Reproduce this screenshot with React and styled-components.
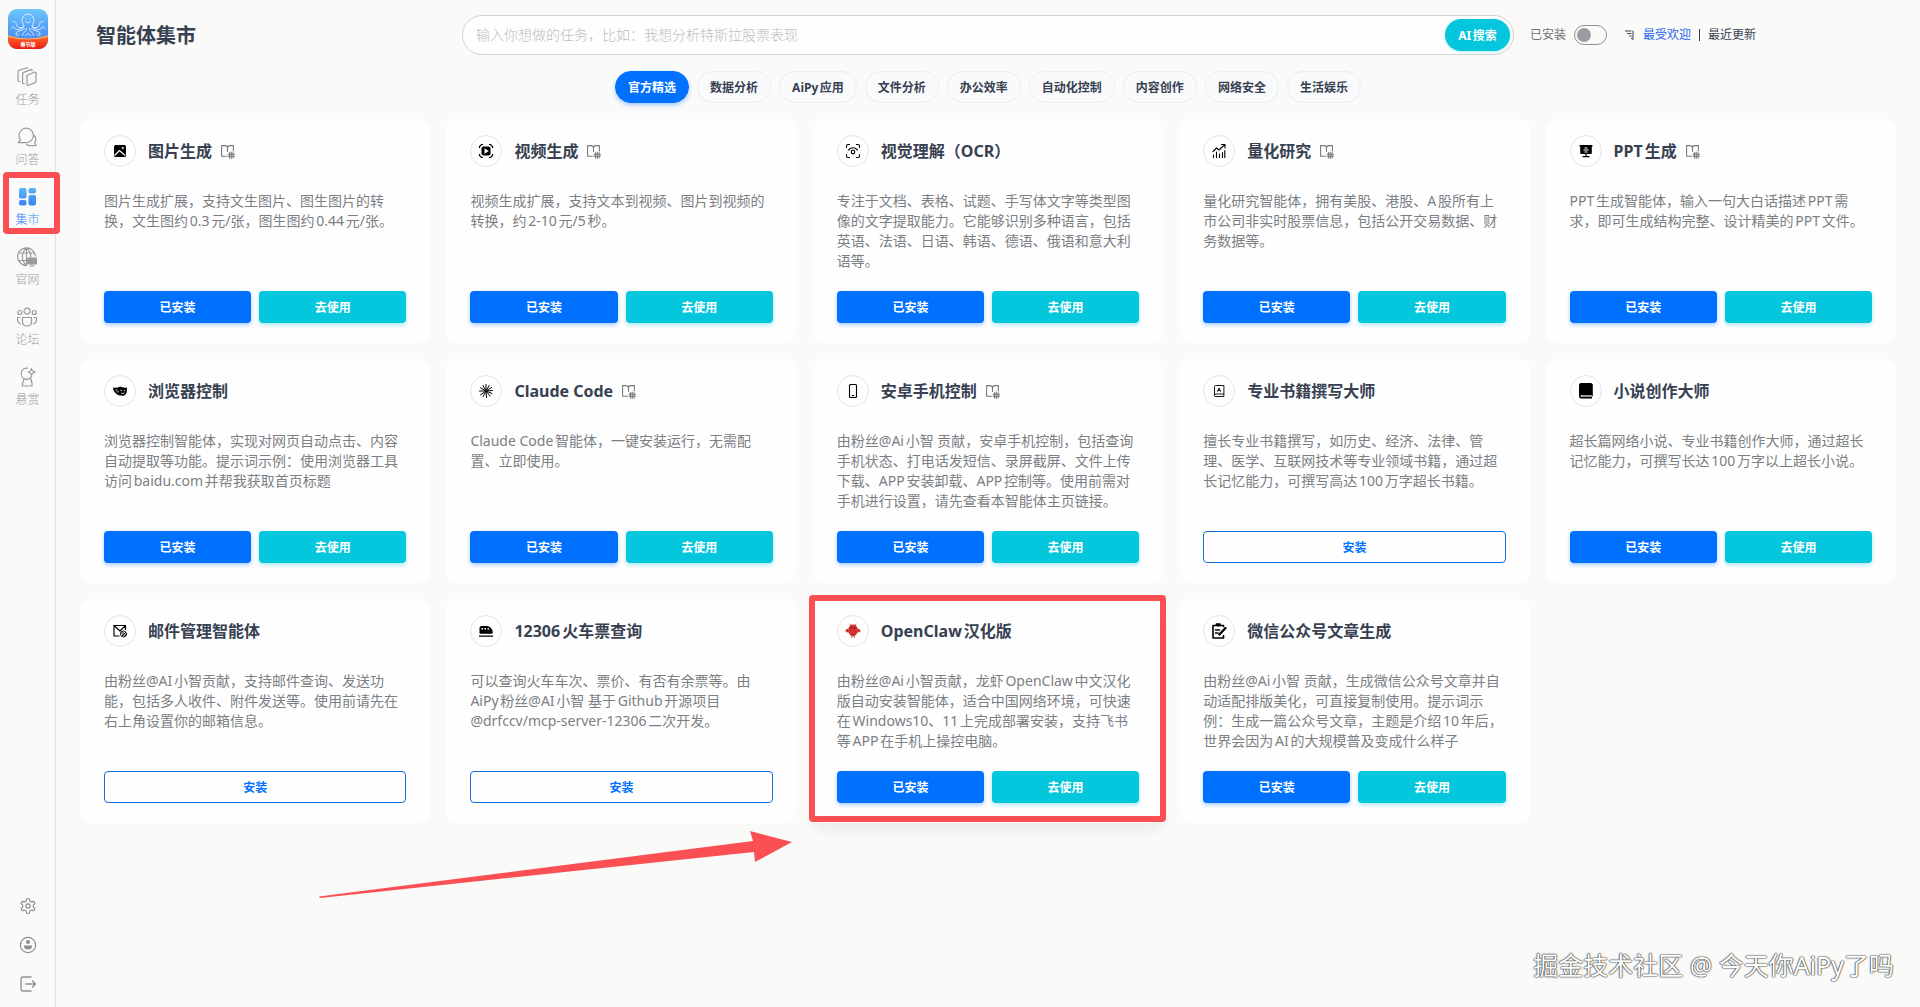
import React from "react";
import styled, { createGlobalStyle, css } from "styled-components";

const fontStack = `"Noto Sans", "Noto Sans CJK SC", sans-serif`;
const red = "#fa5053";

const GlobalStyle = createGlobalStyle`
  *, *::before, *::after { box-sizing: border-box; }
  body {
    margin: 0;
    background: #fafaf9;
    color: #374151;
    font-family: ${fontStack};
    text-autospace: normal;
  }
  button, input { font-family: inherit; }
  svg { display: block; }
`;

/* ---------- layout ---------- */

const Shell = styled.div`
  display: flex;
  min-height: 100vh;
`;

const Sidebar = styled.nav`
  flex: 0 0 56px;
  display: flex;
  flex-direction: column;
  align-items: center;
  padding: 9px 0 14px;
  border-right: 1px solid #e2e2e2;
`;

const NavList = styled.ul`
  list-style: none;
  margin: 18px 0 0;
  padding: 0;
`;

const NavItem = styled.li`
  position: relative;
  height: 60px;
`;

const NavLink = styled.a`
  display: flex;
  flex-direction: column;
  align-items: center;
  gap: 4px;
  font-size: 12px;
  line-height: 18px;
  font-weight: 300;
  color: ${(p) => (p.$active ? "#3b8cf8" : "#9b9b9b")};
  text-decoration: none;
`;

const NavHighlight = styled.span`
  position: absolute;
  inset: -15px -20px 13px -12px;
  border: 6px solid ${red};
  border-radius: 4px;
  pointer-events: none;
`;

const SideTools = styled.div`
  margin-top: auto;
  display: flex;
  flex-direction: column;
  gap: 21px;
`;

const ToolButton = styled.button`
  padding: 0;
  border: 0;
  background: none;
  color: #8e8e8e;
  cursor: pointer;
`;

const Main = styled.main`
  position: relative;
  flex: 1;
  min-width: 0;
  padding: 15px 24px 24px;
`;

const Header = styled.header`
  display: flex;
  align-items: center;
  padding: 0 140px 0 16px;
`;

const PageTitle = styled.h1`
  flex: 0 0 366px;
  margin: 0;
  padding-top: 2px;
  font-size: 20px;
  line-height: 38px;
  font-weight: 700;
  color: #374151;
`;

const SearchBox = styled.form`
  flex: 1;
  display: flex;
  align-items: center;
  height: 40px;
  padding: 0 3px 0 13px;
  border: 1px solid #d3d3d3;
  border-radius: 20px;
  background: #fefefe;
`;

const SearchInput = styled.input`
  flex: 1;
  min-width: 0;
  border: 0;
  outline: 0;
  padding: 0;
  background: transparent;
  font-size: 14px;
  line-height: 20px;
  &::placeholder { color: #bdbdbd; font-weight: 300; opacity: 1; }
`;

const SearchButton = styled.button`
  width: 65px;
  height: 32px;
  padding: 0;
  border: 0;
  border-radius: 16px;
  background: #04c6dc;
  color: #fff;
  font-size: 12px;
  font-weight: 700;
  box-shadow: 0 1px 3px rgba(4, 198, 220, 0.3);
`;

const InstalledFilter = styled.label`
  display: flex;
  align-items: center;
  gap: 8px;
  margin-left: 16px;
  font-size: 12px;
  line-height: 20px;
  color: #6f7278;
`;

const Switch = styled.input`
  appearance: none;
  width: 33px;
  height: 20px;
  margin: 0;
  padding: 2px;
  border: 1px solid #8f9194;
  border-radius: 10px;
  &::before {
    content: "";
    display: block;
    width: 14px;
    height: 14px;
    border-radius: 50%;
    background: #9a9ca1;
  }
  &:checked::before { margin-left: auto; background: #0070ff; }
`;

const SortGroup = styled.div`
  display: flex;
  align-items: center;
  gap: 8px;
  margin-left: 18px;
`;

const SortButton = styled.button`
  padding: 0;
  border: 0;
  background: none;
  font-size: 12px;
  line-height: 20px;
  color: ${(p) => (p.$active ? "#2563eb" : "#374151")};
`;

const SortDivider = styled.span`
  width: 1px;
  height: 12px;
  background: #374151;
`;

const ChipRow = styled.div`
  display: flex;
  justify-content: center;
  gap: 8px;
  margin: 16px 0;
`;

const Chip = styled.button`
  height: 32px;
  padding: 0 12px;
  border: 1px solid #ececee;
  border-radius: 16px;
  background: #f9fafb;
  color: #374151;
  font-size: 12px;
  font-weight: 700;
  ${(p) =>
    p.$active &&
    css`
      border-color: #0070ff;
      background: #0070ff;
      color: #fff;
      box-shadow: 0 2px 4px rgba(0, 112, 255, 0.35);
    `}
`;

/* ---------- cards ---------- */

const CardGrid = styled.section`
  display: grid;
  grid-template-columns: repeat(5, minmax(0, 1fr));
  gap: 16px;
`;

const Card = styled.article`
  position: relative;
  display: flex;
  flex-direction: column;
  padding: 16px 24px 20px;
  border-radius: 12px;
  background: #fefefe;
  box-shadow: ${(p) =>
    p.$raised ? "0 8px 12px rgba(0, 0, 0, 0.06)" : "none"};
`;

const CardHead = styled.div`
  display: flex;
  align-items: center;
  height: 32px;
`;

const IconRing = styled.span`
  flex: 0 0 32px;
  height: 32px;
  display: grid;
  place-items: center;
  border: 1px solid #e5e5e7;
  border-radius: 50%;
  color: #000;
`;

const CardTitle = styled.h2`
  margin: 0 8px 0 12px;
  font-size: 16px;
  line-height: 24px;
  font-weight: 700;
  color: #374151;
`;

const DocLink = styled.a`
  color: #74777c;
`;

const Description = styled.p`
  height: 80px;
  margin: 24px 0 20px;
  font-size: 14px;
  line-height: 20px;
  color: #7c7f84;
`;

const Actions = styled.div`
  display: flex;
  gap: 8px;
`;

const tones = {
  blue: css`
    background: #0070ff;
    color: #fff;
    box-shadow: 0 2px 4px rgba(0, 112, 255, 0.35);
  `,
  cyan: css`
    background: #04c6dc;
    color: #fff;
    box-shadow: 0 2px 4px rgba(4, 198, 220, 0.35);
  `,
  outline: css`
    border: 1px solid #0f6fdc;
    background: #fefefe;
    color: #0070ff;
  `,
};

const ActionButton = styled.button`
  flex: 1;
  height: 32px;
  padding: 0;
  border: 0;
  border-radius: 4px;
  font-size: 12px;
  font-weight: 700;
  ${(p) => tones[p.$tone]}
`;

const CardHighlight = styled.span`
  position: absolute;
  inset: -4px -3px 1px -4px;
  border: 6px solid ${red};
  border-radius: 4px;
  pointer-events: none;
`;

const PointerArrow = styled.svg`
  position: absolute;
  left: 263px;
  top: 828px;
  pointer-events: none;
`;

const Watermark = styled.p`
  position: absolute;
  right: 26px;
  bottom: 24px;
  margin: 0;
  font-size: 25px;
  line-height: 36px;
  color: #fff;
  text-autospace: no-autospace;
  text-shadow: 0 0 1px #222, 0 0 2px #444, 0 0 1px #444;
`;

/* ---------- drawings ---------- */

const Line = ({ size = 20, box = 20, width = 1.2, children }) => (
  <svg width={size} height={size} viewBox={`0 0 ${box} ${box}`} fill="none" stroke="currentColor"
    strokeWidth={width} strokeLinecap="round" strokeLinejoin="round" aria-hidden="true">
    {children}
  </svg>
);

const Logo = () => (
  <svg width="40" height="40" viewBox="0 0 40 40" role="img" aria-label="AiPy">
    <defs>
      <linearGradient id="sky" x1="0" y1="0" x2="0" y2="1">
        <stop offset="0" stopColor="#6cc6fb" />
        <stop offset="1" stopColor="#3a78f0" />
      </linearGradient>
      <linearGradient id="fire" x1="0" y1="0" x2="0" y2="1">
        <stop offset="0" stopColor="#ff6a2b" />
        <stop offset="1" stopColor="#ec1d12" />
      </linearGradient>
      <clipPath id="tile"><rect width="40" height="40" rx="9" /></clipPath>
    </defs>
    <g clipPath="url(#tile)">
      <rect width="40" height="40" fill="url(#sky)" />
      <path d="M0 27Q20 33 40 27V40H0Z" fill="url(#fire)" />
      <path d="M0 27Q20 33 40 27" fill="none" stroke="#ffb45c" strokeWidth="1.2" />
    </g>
    <g fill="none" stroke="#e4f3ff" strokeWidth=".9" strokeLinecap="round" strokeLinejoin="round">
      <path d="M16 17C12.500 13.500 13.500 5 20 5S27.500 13.500 24 17" />
      <path d="M17.500 12.500Q20 15.500 22.500 12.500M18 9.800h.2M21.900 9.800h.2" />
      <path d="M16 17C14 20 9 19 8.500 15.500C8 12.500 6 11.500 4.500 13M24 17C26 20 31 19 31.500 15.500C32 12.500 34 11.500 35.500 13" />
      <path d="M15.500 18.500C12 21 8 21.500 6.500 19C5.500 17.500 4 17.500 3.500 19M24.500 18.500C28 21 32 21.500 33.500 19C34.500 17.500 36 17.500 36.500 19" />
      <path d="M16.500 19.500C14 23 8 21 8 25C8 27 11 27 11 25M23.500 19.500C26 23 32 21 32 25C32 27 29 27 29 25" />
      <path d="M18.500 19.500C19 23 14 23 14.500 26.500M21.500 19.500C21 23 26 23 25.500 26.500M17.500 27Q20 22 22.500 27" />
    </g>
    <text x="20" y="37" textAnchor="middle" fontSize="5" fontWeight="700" fill="#fff">春节版</text>
  </svg>
);

const navIcons = {
  tasks: (
    <Line>
      <path d="M10 8.200 17.500 5.200Q19 4.800 19 6.200V14Q19 15.200 18 15.600L11.500 18.300Q10 18.800 10 17.400Z" />
      <path d="M7.200 16.500Q5.600 17 5.600 15.500V6.800Q5.600 5.800 6.600 5.400L14 2.600Q15 2.400 15.200 3.600" />
      <path d="M3 14.500Q1 14.600 1 13V4.800Q1 3.800 2 3.400L9 1Q10.200.8 10.600 1.600" />
    </Line>
  ),
  chat: (
    <Line>
      <path d="M3.500 12.800A7.200 7.200 0 1 1 8.500 15.600H1.200L3.500 12.800Z" />
      <path d="M17.200 8.500A5.600 5.600 0 0 1 17.600 15.500L19 18.600H13.600Q11 18.600 9.800 17.500" />
    </Line>
  ),
  market: (
    <svg width="20" height="20" viewBox="0 0 20 20" aria-hidden="true">
      <defs>
        <linearGradient id="market" x1="0" y1="0" x2="0" y2="20" gradientUnits="userSpaceOnUse">
          <stop offset="0" stopColor="#5bb8f8" />
          <stop offset="1" stopColor="#3a7df2" />
        </linearGradient>
      </defs>
      <g fill="url(#market)">
        <rect x="2" y="1" width="7.500" height="10.500" rx="2" />
        <rect x="11.500" y="1" width="7.500" height="5.500" rx="2" />
        <rect x="2" y="13" width="7.500" height="5.500" rx="2" />
        <rect x="11.500" y="8" width="7.500" height="10.500" rx="2" />
      </g>
    </svg>
  ),
  site: (
    <Line>
      <path d="M18.300 9A8.800 8.800 0 1 0 9.500 18.500M9.500 1C4 6 4 13.500 9.500 18.500M9.500 1Q14 5 13.800 10M9.500 1V18M1.700 6H17.400M1.700 13.500H9" />
      <rect x="10.500" y="11" width="9" height="6" rx="1" fill="currentColor" />
      <path d="M15 17v2M13 19h4" />
    </Line>
  ),
  forum: (
    <Line>
      <circle cx="10" cy="4.200" r="3" />
      <circle cx="2.800" cy="5.500" r="2" />
      <circle cx="17.200" cy="5.500" r="2" />
      <path d="M5.500 10.500H14.500V14.500Q14.500 19 10 19T5.500 14.500ZM3.500 17Q.5 16 .5 12.800V10.500H3M16.500 17Q19.500 16 19.500 12.800V10.500H17" />
    </Line>
  ),
  bounty: (
    <Line>
      <path d="M10.500 1.200A5.600 5.600 0 1 0 14.600 9.500M7 12H14L15 16.500V19H5.500V16.500ZM14.500 1.500Q14.800 4.500 18.500 5Q15 5.500 14.500 8.500Q14 5.500 11 5Q14.200 4.500 14.500 1.500Z" />
    </Line>
  ),
};

const toolIcons = {
  设置: (
    <Line size={18} box={24} width={1.6}>
      <path d="M12.220 2h-.44a2 2 0 0 0-2 2v.18a2 2 0 0 1-1 1.730l-.43.25a2 2 0 0 1-2 0l-.15-.08a2 2 0 0 0-2.730.73l-.22.38a2 2 0 0 0 .73 2.730l.15.1a2 2 0 0 1 1 1.720v.51a2 2 0 0 1-1 1.740l-.15.09a2 2 0 0 0-.73 2.730l.22.38a2 2 0 0 0 2.730.73l.15-.08a2 2 0 0 1 2 0l.43.25a2 2 0 0 1 1 1.730V20a2 2 0 0 0 2 2h.44a2 2 0 0 0 2-2v-.18a2 2 0 0 1 1-1.730l.43-.25a2 2 0 0 1 2 0l.15.08a2 2 0 0 0 2.730-.73l.22-.39a2 2 0 0 0-.73-2.730l-.15-.08a2 2 0 0 1-1-1.740v-.5a2 2 0 0 1 1-1.740l.15-.09a2 2 0 0 0 .73-2.730l-.22-.38a2 2 0 0 0-2.730-.73l-.15.08a2 2 0 0 1-2 0l-.43-.25a2 2 0 0 1-1-1.730V4a2 2 0 0 0-2-2z" />
      <circle cx="12" cy="12" r="2.800" />
    </Line>
  ),
  账户: (
    <Line size={18} box={18} width={1.2}>
      <circle cx="9" cy="9" r="7.600" />
      <g fill="currentColor" stroke="none">
        <circle cx="9" cy="6" r="2" />
        <path d="M5 9.500H13V11Q12 13.500 9 13.500T5 11Z" />
      </g>
    </Line>
  ),
  退出: (
    <Line size={18} box={18} width={1.3}>
      <path d="M12 2H4Q2 2 2 4V14Q2 16 4 16H12M7 9H16M13.500 6 16.500 9 13.500 12" />
    </Line>
  ),
};

const DocIcon = () => (
  <Line size={15} box={14} width={1}>
    <path d="M6 11.500H1.500V1.500H4.500Q7 1.500 7 3.500V7M7 3.500Q7 1.500 9.500 1.500H12.500V6.500" />
    <path d="M10.500 7.500V13.500M8.800 8V13M12.200 8V13M7.500 9.500H13.500M7.500 11.500H13.500" />
  </Line>
);

const SortIcon = () => (
  <Line size={10} box={10} width={1}>
    <path d="M.5 1H6M2.500 3.500H6M4.500 6H6M8 1V9.500L6.200 8" />
  </Line>
);

const Solid = ({ children }) => (
  <svg width="16" height="16" viewBox="0 0 16 16" fill="currentColor" aria-hidden="true">{children}</svg>
);

const cardIcons = {
  image: (
    <Solid>
      <rect x="2" y="2" width="12" height="12" rx="1.500" />
      <circle cx="10.800" cy="5" r="1" fill="#fff" />
      <path d="M2.500 12.500 7.500 7.500 13 12.500" fill="none" stroke="#fff" strokeWidth="1.200" />
    </Solid>
  ),
  video: (
    <Solid>
      <rect x="3.500" y="3.500" width="9" height="9" rx="2" />
      <path d="M6.500 5.300 10.800 8 6.500 10.700Z" fill="#fff" />
      <path d="M1.500 5V3.500L3.500 1.500H5M11 1.500H12.500L14.500 3.500V5M14.500 11V12.500L12.500 14.500H11M5 14.500H3.500L1.500 12.500V11" fill="none" stroke="currentColor" strokeWidth="1.200" />
    </Solid>
  ),
  ocr: (
    <Line size={16} box={16} width={1.1}>
      <path d="M1.500 4.500V3Q1.500 1.500 3 1.500H4.500M11.500 1.500H13Q14.500 1.500 14.500 3V4.500M14.500 11.500V13Q14.500 14.500 13 14.500H11.500M4.500 14.500H3Q1.500 14.500 1.500 13V11.500M3.500 7Q8 2.500 12.500 7" />
      <rect x="6.400" y="7.200" width="3.200" height="3.400" rx="1" />
    </Line>
  ),
  quant: (
    <Line size={16} box={16} width={1.1}>
      <path d="M2 8.500 5.500 5 8 7 13.500 1.800M10.500 1.500H14V5M2.500 14.500V12M5.500 14.500V9M8.500 14.500V11M11.500 14.500V9.500M13.800 14.500V7.500" />
    </Line>
  ),
  ppt: (
    <Solid>
      <path d="M1.500 2H14.500V3.500H13.800V10Q13.800 11 12.800 11H3.200Q2.200 11 2.200 10V3.500H1.500ZM7.400 11H8.600V13H7.400ZM4.500 13H11.500V14.200H4.500Z" />
      <path d="M6.500 5H9.500M5.500 7H10.500M6.500 9H9.500" stroke="#fff" strokeWidth="1" />
    </Solid>
  ),
  masks: (
    <Solid>
      <path d="M1 4.500Q4.500 5.500 8.500 3.500L9.500 4Q12.500 5 15 4.500Q15.500 9 13.500 11.500Q11.500 13.500 9.500 12.500Q7 13 4.500 11Q1.500 9 1 4.500Z" />
      <path d="M3.500 7.200 5.500 6.800M8.500 7.200 10 7.600M11.800 7.800 13.200 7.500M9 10Q11 11.500 12.500 9.800M4.500 9Q5.500 8.500 6.800 8.800" fill="none" stroke="#fff" strokeWidth=".8" />
    </Solid>
  ),
  claude: (
    <Line size={16} box={16} width={1}>
      <path d="M8 8V1.500M8 8 11.200 2.500M8 8 13.500 4.500M8 8 14.500 7.500M8 8 14 10.500M8 8 12 13M8 8 8.600 14.500M8 8 5.200 13.500M8 8 2.500 11.800M8 8H1.500M8 8 2.500 4.800M8 8 5 2.500" />
    </Line>
  ),
  phone: (
    <Line size={16} box={16} width={1.1}>
      <rect x="4.500" y="1.500" width="7" height="13" rx="1" />
      <path d="M7.200 12.500H8.800" />
    </Line>
  ),
  dictionary: (
    <Line size={16} box={16} width={0.9}>
      <path d="M12.500 2.500H4.500Q3.500 2.500 3.500 3.500V12.500Q3.500 13.500 4.500 13.500H12.500ZM3.500 12Q3.800 11 5 11H12.500M6.600 8.500 8 5 9.400 8.500M7.100 7.300H8.900" />
    </Line>
  ),
  book: (
    <Solid>
      <path d="M3 0H13Q14 0 14 1V12H3.500Q2.500 12 2.500 13T3.500 14H14V15.500H3Q1 15.500 1 13.500V2Q1 0 3 0Z" />
      <path d="M3.500 13H14.500V1" fill="none" stroke="currentColor" strokeWidth=".8" />
    </Solid>
  ),
  mail: (
    <Line size={16} box={16} width={1.2}>
      <path d="M13.500 6.500V2.500H2V13H7M2 2.500 8 8 13.500 2.500" />
      <g strokeWidth=".9">
        <circle cx="11.500" cy="11" r="3" />
        <path d="M9 9.500 13 13.500M10 8.500 14 12.500M10 13 13.500 9.500" />
      </g>
    </Line>
  ),
  train: (
    <Solid>
      <path d="M3.500 3H9Q14.500 4 14.800 9.500Q14.800 10.800 13.500 10.800H2.200Q1.500 10.800 1.500 10V5Q1.500 3 3.500 3ZM1 12.500H15V13.800H1Z" />
      <path d="M3.500 5H5V6.500H3.500ZM6.500 5H8V6.500H6.500ZM9.500 5H10.500L11.500 6.500H9.500Z" fill="#fff" />
    </Solid>
  ),
  claw: (
    <Solid>
      <g fill="#d0302f">
        <path d="M8 1.500Q12 1.500 12.600 6.500Q12.800 11 9.700 13V15H8.900V13.300H7.100V15H6.300V13Q3.200 11 3.400 6.500Q4 1.500 8 1.500Z" />
        <path d="M3.800 5.500Q.8 5.500.5 8Q1.200 9.800 3.800 9.500ZM12.200 5.500Q15.200 5.500 15.500 8Q14.800 9.800 12.200 9.500Z" />
        <path d="M5.700 2.500 5 .8M10.300 2.500 11 .8" stroke="#d0302f" strokeWidth=".8" />
      </g>
      <circle cx="6.300" cy="5" r=".8" fill="#4b1414" />
      <circle cx="9.700" cy="5" r=".8" fill="#4b1414" />
    </Solid>
  ),
  article: (
    <Line size={18} box={18} width={1.6}>
      <path d="M13.500 4.500V3.500H3V16H13.500V13.500M5.500 8H9.500M5.500 11H8M9 12.500 15.500 6" />
      <path d="M6.500 3.500V2H10V3.500Z" fill="currentColor" />
      <path d="M15.500 6 9.500 12.500" strokeWidth="2.200" />
    </Line>
  ),
};

/* ---------- data ---------- */

const nav = [
  ["tasks", "任务"],
  ["chat", "问答"],
  ["market", "集市"],
  ["site", "官网"],
  ["forum", "论坛"],
  ["bounty", "悬赏"],
];

const categories = ["官方精选", "数据分析", "AiPy应用", "文件分析", "办公效率", "自动化控制", "内容创作", "网络安全", "生活娱乐"];

const agents = [
  { icon: "image", title: "图片生成", doc: true, installed: true, text: "图片生成扩展，支持文生图片、图生图片的转换，文生图约0.3元/张，图生图约0.44元/张。" },
  { icon: "video", title: "视频生成", doc: true, installed: true, text: "视频生成扩展，支持文本到视频、图片到视频的转换，约2-10元/5秒。" },
  { icon: "ocr", title: "视觉理解（OCR）", installed: true, text: "专注于文档、表格、试题、手写体文字等类型图像的文字提取能力。它能够识别多种语言，包括英语、法语、日语、韩语、德语、俄语和意大利语等。" },
  { icon: "quant", title: "量化研究", doc: true, installed: true, text: "量化研究智能体，拥有美股、港股、A股所有上市公司非实时股票信息，包括公开交易数据、财务数据等。" },
  { icon: "ppt", title: "PPT生成", doc: true, installed: true, text: "PPT生成智能体，输入一句大白话描述PPT需求，即可生成结构完整、设计精美的PPT文件。" },
  { icon: "masks", title: "浏览器控制", installed: true, text: "浏览器控制智能体，实现对网页自动点击、内容自动提取等功能。提示词示例：使用浏览器工具访问baidu.com并帮我获取首页标题" },
  { icon: "claude", title: "Claude Code", doc: true, installed: true, text: "Claude Code智能体，一键安装运行，无需配置、立即使用。" },
  { icon: "phone", title: "安卓手机控制", doc: true, installed: true, text: "由粉丝@Ai小智 贡献，安卓手机控制，包括查询手机状态、打电话发短信、录屏截屏、文件上传下载、APP安装卸载、APP控制等。使用前需对手机进行设置，请先查看本智能体主页链接。" },
  { icon: "dictionary", title: "专业书籍撰写大师", text: "擅长专业书籍撰写，如历史、经济、法律、管理、医学、互联网技术等专业领域书籍，通过超长记忆能力，可撰写高达100万字超长书籍。" },
  { icon: "book", title: "小说创作大师", installed: true, text: "超长篇网络小说、专业书籍创作大师，通过超长记忆能力，可撰写长达100万字以上超长小说。" },
  { icon: "mail", title: "邮件管理智能体", text: "由粉丝@AI小智贡献，支持邮件查询、发送功能，包括多人收件、附件发送等。使用前请先在右上角设置你的邮箱信息。" },
  { icon: "train", title: "12306火车票查询", text: "可以查询火车车次、票价、有否有余票等。由AiPy粉丝@AI小智 基于Github开源项目@drfccv/mcp-server-12306二次开发。" },
  { icon: "claw", title: "OpenClaw汉化版", installed: true, highlighted: true, text: "由粉丝@Ai小智贡献，龙虾OpenClaw中文汉化版自动安装智能体，适合中国网络环境，可快速在Windows10、11上完成部署安装，支持飞书等APP在手机上操控电脑。" },
  { icon: "article", title: "微信公众号文章生成", installed: true, text: "由粉丝@Ai小智 贡献，生成微信公众号文章并自动适配排版美化，可直接复制使用。提示词示例：生成一篇公众号文章，主题是介绍10年后，世界会因为AI的大规模普及变成什么样子" },
];

const AgentCard = ({ agent }) => (
  <Card $raised={agent.highlighted}>
    <CardHead>
      <IconRing>{cardIcons[agent.icon]}</IconRing>
      <CardTitle>{agent.title}</CardTitle>
      {agent.doc && (
        <DocLink href="#doc" aria-label={`${agent.title}文档`}>
          <DocIcon />
        </DocLink>
      )}
    </CardHead>
    <Description>{agent.text}</Description>
    <Actions>
      {agent.installed ? (
        <>
          <ActionButton $tone="blue">已安装</ActionButton>
          <ActionButton $tone="cyan">去使用</ActionButton>
        </>
      ) : (
        <ActionButton $tone="outline">安装</ActionButton>
      )}
    </Actions>
    {agent.highlighted && <CardHighlight />}
  </Card>
);

export default function App() {
  return (
    <>
      <GlobalStyle />
      <Shell>
        <Sidebar>
          <Logo />
          <NavList>
            {nav.map(([icon, label]) => (
              <NavItem key={icon}>
                <NavLink href={`#${icon}`} $active={icon === "market"}>
                  {navIcons[icon]}
                  {label}
                </NavLink>
                {icon === "market" && <NavHighlight />}
              </NavItem>
            ))}
          </NavList>
          <SideTools>
            {Object.entries(toolIcons).map(([label, icon]) => (
              <ToolButton key={label} aria-label={label}>{icon}</ToolButton>
            ))}
          </SideTools>
        </Sidebar>
        <Main>
          <Header>
            <PageTitle>智能体集市</PageTitle>
            <SearchBox onSubmit={(e) => e.preventDefault()}>
              <SearchInput aria-label="搜索任务" placeholder="输入你想做的任务，比如：我想分析特斯拉股票表现" />
              <SearchButton type="submit">AI搜索</SearchButton>
            </SearchBox>
            <InstalledFilter>
              已安装
              <Switch type="checkbox" role="switch" />
            </InstalledFilter>
            <SortGroup>
              <SortIcon />
              <SortButton $active>最受欢迎</SortButton>
              <SortDivider />
              <SortButton>最近更新</SortButton>
            </SortGroup>
          </Header>
          <ChipRow>
            {categories.map((name, i) => (
              <Chip key={name} $active={i === 0}>{name}</Chip>
            ))}
          </ChipRow>
          <CardGrid>
            {agents.map((agent) => (
              <AgentCard key={agent.title} agent={agent} />
            ))}
          </CardGrid>
          <PointerArrow width="476" height="72" viewBox="0 0 476 72" aria-hidden="true">
            <path d="M0 68.500 434 13 431 3 473 14 436 34 435 24 1 70Z" fill={red} />
          </PointerArrow>
          <Watermark>掘金技术社区 @ 今天你AiPy了吗</Watermark>
        </Main>
      </Shell>
    </>
  );
}
